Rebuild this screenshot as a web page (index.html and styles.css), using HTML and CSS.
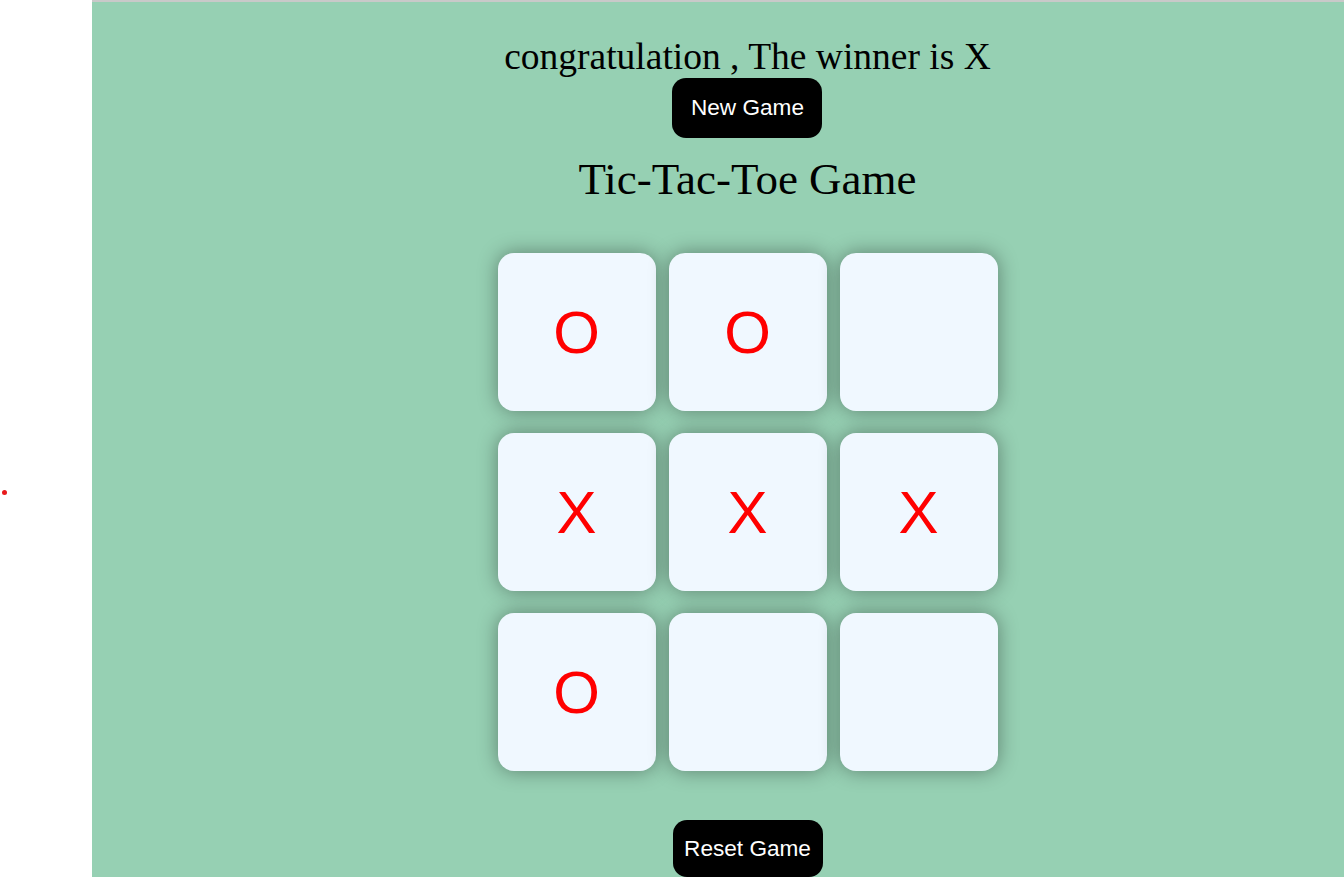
FILE: index.html
```html
<!DOCTYPE html>
<html>
<head>
<meta charset="utf-8">
<title>Tic-Tac-Toe</title>
<link rel="stylesheet" href="styles.css">
</head>
<body>
<div class="side"><span class="dot"></span></div>
<main class="main">
  <div class="msg-container">
    <p class="msg">congratulation , The winner is X</p>
    <button class="btn new-btn">New Game</button>
  </div>
  <h1 class="title">Tic-Tac-Toe Game</h1>
  <div class="game">
    <button class="box">O</button>
    <button class="box">O</button>
    <button class="box"></button>
    <button class="box">X</button>
    <button class="box">X</button>
    <button class="box">X</button>
    <button class="box">O</button>
    <button class="box"></button>
    <button class="box"></button>
  </div>
  <button class="btn reset-btn">Reset Game</button>
</main>
</body>
</html>
```
FILE: styles.css
```css
html, body {
  margin: 0;
  padding: 0;
  height: 100%;
}
body {
  display: flex;
  background: #ffffff;
  overflow: hidden;
  font-family: "Liberation Serif", "Times New Roman", serif;
}
.side {
  width: 92px;
  flex: none;
  position: relative;
}
.dot {
  position: absolute;
  left: 2px;
  top: 490px;
  width: 5px;
  height: 5px;
  border-radius: 50%;
  background: #e8191b;
}
.main {
  flex: 1;
  background: #96d0b3;
  border-top: 2px solid #c9c9c9;
  padding-left: 59px;
  display: flex;
  flex-direction: column;
  align-items: center;
}
.msg-container {
  display: flex;
  flex-direction: column;
  align-items: center;
}
.msg {
  margin: 0;
  margin-top: 34px;
  font-size: 37.5px;
  line-height: 42px;
  color: #000;
}
.btn {
  background: #000;
  color: #fff;
  border: none;
  border-radius: 14px;
  font-family: "Liberation Sans", Arial, sans-serif;
  font-size: 22.6px;
  width: 150px;
  height: 60px;
  padding: 0;
}
.title {
  margin: 15px 0 0;
  font-weight: normal;
  font-size: 45px;
  line-height: 52px;
}
.game {
  margin-top: 48px;
  display: grid;
  grid-template-columns: repeat(3, 158px);
  grid-auto-rows: 158px;
  gap: 22px 13px;
}
.box {
  background: #f0f8ff;
  border: none;
  border-radius: 16px;
  box-shadow: 0 0 20px rgba(0, 0, 0, 0.38);
  font-family: "Liberation Sans", Arial, sans-serif;
  font-size: 60px;
  color: #ff0000;
  padding: 0;
}
.reset-btn {
  margin-top: 49px;
}
```
